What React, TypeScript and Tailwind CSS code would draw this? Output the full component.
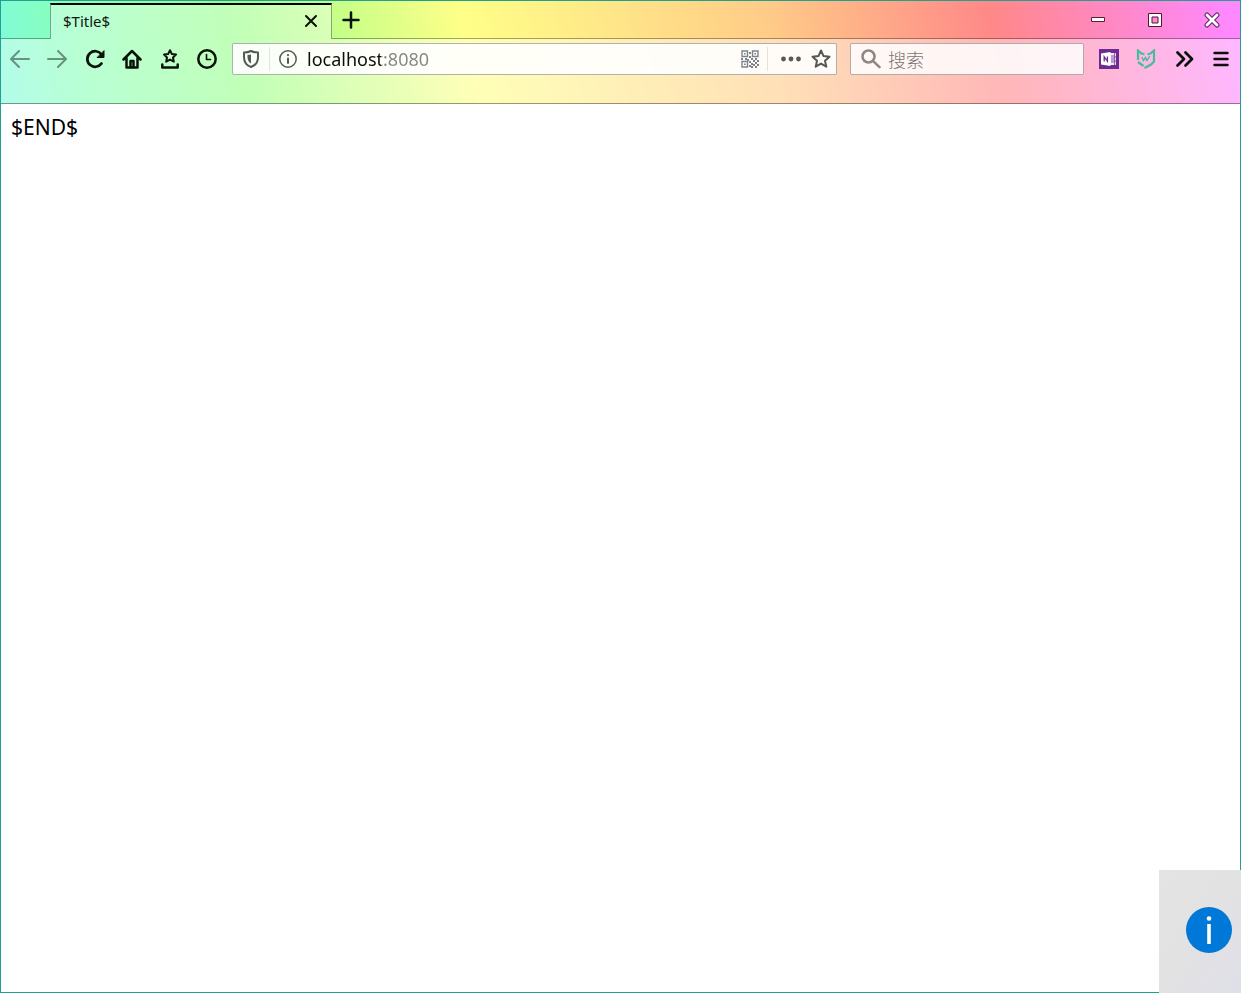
import type { ReactNode } from "react";

type IconButtonProps = {
  label: string;
  disabled?: boolean;
  children: ReactNode;
};

function IconButton({ label, disabled = false, children }: IconButtonProps) {
  return (
    <button
      type="button"
      aria-label={label}
      disabled={disabled}
      className="flex h-8 w-8 shrink-0 items-center justify-center text-[#0a120a] disabled:opacity-45"
    >
      {children}
    </button>
  );
}

function StrokeIcon({ width = 2, children }: { width?: number; children: ReactNode }) {
  return (
    <svg
      viewBox="0 0 20 20"
      className="h-5 w-5 shrink-0"
      fill="none"
      stroke="currentColor"
      strokeWidth={width}
      strokeLinecap="round"
      strokeLinejoin="round"
      aria-hidden="true"
    >
      {children}
    </svg>
  );
}

function QrIcon() {
  return (
    <svg
      viewBox="0 0 18 18"
      className="h-[18px] w-[18px]"
      fill="none"
      stroke="currentColor"
      strokeWidth="1.4"
      aria-hidden="true"
    >
      <path d="M1 1h5.500v5.500H1zM11.500 1H17v5.500h-5.500zM1 11.500h5.500V17H1z" />
      <path
        d="M3 3h1.600v1.600H3zM13.400 3H15v1.600h-1.600zM3 13.400h1.600V15H3zM8 2h2v2H8zM8 6h2v2H8zM0 8h2v2H0zM4 8h2v2H4zM6 9h2v2H6zM10 8h2v2h-2zM14 8h2v2h-2zM12 10h2v2h-2zM16 10h2v2h-2zM8 11h2v2H8zM10 13h2v2h-2zM14 12h2v2h-2zM12 14h2v2h-2zM16 14h2v2h-2zM8 15h2v2H8zM10 16h2v2h-2zM14 16h2v2h-2z"
        fill="currentColor"
        stroke="none"
      />
    </svg>
  );
}

function NotebookIcon() {
  return (
    <svg viewBox="0 0 20 20" className="h-5 w-5" aria-hidden="true">
      <path d="M0 0h20v20H0z" fill="#6a2c91" />
      <path d="M11 4h6v12h-6z" fill="#f3e6fa" />
      <path d="M12 6h3v8h-3z" fill="#b79ad0" />
      <path d="M15.600 4v12M15.600 8h2M15.600 12h2" stroke="#6a2c91" strokeWidth="0.8" />
      <path d="M2 4.500l9.500-1.500v14L2 15.500z" fill="#fff" />
      <path d="M5.200 12.500V7.700l3.200 4.600V7.500" fill="none" stroke="#6a2c91" strokeWidth="1.300" />
    </svg>
  );
}

function ShieldCatIcon() {
  return (
    <svg
      viewBox="0 0 20 20"
      className="h-5 w-5"
      fill="none"
      stroke="#45bd9c"
      strokeWidth="2.200"
      aria-hidden="true"
    >
      <path d="M8.500 5.200L5.500 4.500L2 1.500v9.500M2 13l5.500 4M11.500 5.200l3-.7L18 1.500V12.500l-3 3-6.500 3.500" />
      <path d="M5.800 8l1.700 3.500L9.500 8.500l1.500 3L13.800 7" strokeWidth="1.400" />
    </svg>
  );
}

function TitleBar() {
  return (
    <header className="flex h-[38px]">
      <div className="w-[49px] shrink-0 border-b border-black/35" />
      <div className="mt-0.5 flex w-[282px] shrink-0 items-start justify-between border-x border-t-2 border-x-black/35 border-t-black bg-white/40 pt-1.5 pr-2.5 pl-3">
        <span className="text-[15px] leading-5 text-[#101810]">$Title$</span>
        <button
          type="button"
          aria-label="Close tab"
          className="flex h-5 w-5 items-center justify-center text-[#0a120a]"
        >
          <StrokeIcon>
            <path d="M5 5l10 10M15 5L5 15" />
          </StrokeIcon>
        </button>
      </div>
      <div className="flex min-w-0 flex-1 items-center justify-between border-b border-black/35">
        <button
          type="button"
          aria-label="New tab"
          className="flex h-9 w-[38px] items-center justify-center text-[#0a120a]"
        >
          <StrokeIcon width={2.5}>
            <path d="M10 2.500v15M2.500 10h15" />
          </StrokeIcon>
        </button>
        <div className="flex">
          <button type="button" aria-label="Minimize" className="flex h-9 w-[57px] items-center justify-center">
            <svg viewBox="0 0 14 14" className="h-3.5 w-3.5" aria-hidden="true">
              <path d="M0.500 4.500h13v4h-13z" fill="#fff" stroke="#5a2038" />
            </svg>
          </button>
          <button type="button" aria-label="Maximize" className="flex h-9 w-[57px] items-center justify-center">
            <svg viewBox="0 0 14 14" className="h-3.5 w-3.5" aria-hidden="true">
              <path
                d="M0.500 0.500h13v13h-13zM4 4v6h6V4z"
                fill="#fff"
                fillRule="evenodd"
                stroke="#4a1836"
              />
            </svg>
          </button>
          <button type="button" aria-label="Close window" className="flex h-9 w-[57px] items-center justify-center">
            <svg viewBox="0 0 16 16" className="h-4 w-4" strokeLinecap="round" aria-hidden="true">
              <path d="M3 3l10 10M13 3L3 13" stroke="#6a2a70" strokeWidth="5" />
              <path d="M3 3l10 10M13 3L3 13" stroke="#fff" strokeWidth="2.800" />
            </svg>
          </button>
        </div>
      </div>
    </header>
  );
}

function AddressField() {
  return (
    <div className="flex h-8 min-w-0 flex-1 items-center rounded-xs border border-black/30 bg-white/90 text-[#555855]">
      <button type="button" aria-label="Tracking protection" className="flex h-8 w-9 items-center justify-center">
        <StrokeIcon>
          <path d="M10 2c-2 1-4.500 1.500-7 1.500V8c0 5 2.500 8.500 7 10 4.500-1.500 7-5 7-10V3.500C14.500 3.500 12 3 10 2z" />
          <path d="M10 5.500v9C7.500 13 6.500 11 6.500 8V6c1.500 0 2.500-.2 3.500-.5z" fill="currentColor" stroke="none" />
        </StrokeIcon>
      </button>
      <span className="h-6 w-px bg-black/10" />
      <button type="button" aria-label="Site information" className="flex h-8 w-[35px] items-center justify-center">
        <StrokeIcon width={1.5}>
          <circle cx="10" cy="10" r="8.200" />
          <path d="M10 9.500v4.500M10 6v.2" strokeWidth="2" />
        </StrokeIcon>
      </button>
      <input
        type="text"
        aria-label="Address"
        defaultValue="localhost:8080"
        className="h-7 min-w-0 flex-1 bg-[linear-gradient(to_right,#0c0c0c_76px,#858585_76px)] bg-clip-text px-0.5 text-lg text-transparent outline-none"
      />
      <button
        type="button"
        aria-label="Page QR code"
        className="flex h-8 w-[34px] items-center justify-center text-[#7c838e]"
      >
        <QrIcon />
      </button>
      <span className="h-6 w-px bg-black/10" />
      <button type="button" aria-label="Page actions" className="ml-2 flex h-8 w-[30px] items-center justify-center">
        <svg viewBox="0 0 20 20" className="h-5 w-5" fill="currentColor" aria-hidden="true">
          <circle cx="2.500" cy="10" r="2.400" />
          <circle cx="10" cy="10" r="2.400" />
          <circle cx="17.500" cy="10" r="2.400" />
        </svg>
      </button>
      <button type="button" aria-label="Bookmark this page" className="flex h-8 w-[30px] items-center justify-center">
        <StrokeIcon>
          <path d="M10 1.500l2.500 5.600 6 .6-4.500 4 1.300 6L10 14.600l-5.300 3.100 1.300-6-4.500-4 6-.6z" />
        </StrokeIcon>
      </button>
    </div>
  );
}

function SearchField() {
  return (
    <label className="flex h-8 w-[234px] shrink-0 items-center rounded-xs border border-black/30 bg-white/85 px-2.5 text-[#8f8585]">
      <StrokeIcon width={2.5}>
        <circle cx="7.500" cy="7.500" r="6" />
        <path d="M12.200 12.200l6.300 6" />
      </StrokeIcon>
      <input
        type="text"
        aria-label="Search"
        placeholder="搜索"
        className="ml-[7px] h-7 min-w-0 flex-1 bg-transparent font-['Noto_Sans_CJK_SC',sans-serif] text-lg font-light outline-none placeholder:text-[#7d7474]"
      />
    </label>
  );
}

function Toolbar() {
  return (
    <div className="flex h-[65px] items-start border-b border-black/40 bg-white/40 px-[3px] pt-1">
      <nav aria-label="Navigation" className="mr-[9px] flex w-[219px] shrink-0 justify-between">
        <IconButton label="Back" disabled>
          <StrokeIcon>
            <path d="M19 10H1.500M9 2L1 10l8 8" />
          </StrokeIcon>
        </IconButton>
        <IconButton label="Forward" disabled>
          <StrokeIcon>
            <path d="M1 10h17.500M11 2l8 8-8 8" />
          </StrokeIcon>
        </IconButton>
        <IconButton label="Reload">
          <StrokeIcon width={2.75}>
            <path d="M16.500 14.500A7.800 7.800 0 1 1 16.500 5.500" />
            <path d="M19 2v6.500h-6.500z" fill="currentColor" strokeWidth="1" />
          </StrokeIcon>
        </IconButton>
        <IconButton label="Home">
          <StrokeIcon width={2.5}>
            <path d="M1.500 10.500L10 2l8.500 8.500M4.500 9v9.500h11V9" />
            <path d="M8.500 18v-6h3v6" />
          </StrokeIcon>
        </IconButton>
        <IconButton label="Bookmarks">
          <StrokeIcon>
            <path d="M10 1.200l1.900 3.900 4.100.5-3 2.900.8 4.200-3.800-2.100-3.800 2.100.8-4.200-3-2.900 4.100-.5z" />
            <path d="M2.300 15.500v3h15.400v-3" strokeWidth="2.500" />
          </StrokeIcon>
        </IconButton>
        <IconButton label="History">
          <StrokeIcon>
            <circle cx="10" cy="10" r="8.700" strokeWidth="2.500" />
            <path d="M9.500 5.500V10.500h4" strokeWidth="1.600" />
          </StrokeIcon>
        </IconButton>
      </nav>
      <AddressField />
      <div className="ml-[13px] flex shrink-0">
        <SearchField />
      </div>
      <div className="ml-[9px] flex w-36 shrink-0 justify-between">
        <IconButton label="Notebook clipper">
          <NotebookIcon />
        </IconButton>
        <IconButton label="Web protection">
          <ShieldCatIcon />
        </IconButton>
        <IconButton label="More tools">
          <StrokeIcon width={2.75}>
            <path d="M3.500 3.500L10 10l-6.500 6.500M11.500 3.500L18 10l-6.500 6.500" />
          </StrokeIcon>
        </IconButton>
        <IconButton label="Open menu">
          <StrokeIcon width={2.5}>
            <path d="M3.500 4h13M3.500 10h13M3.500 16h13" />
          </StrokeIcon>
        </IconButton>
      </div>
    </div>
  );
}

function InfoCorner() {
  return (
    <aside className="absolute -right-px -bottom-px flex h-[123px] w-[82px] items-center justify-end bg-linear-to-br from-[#e4e4e4] via-[#e2e2e3] to-[#dfdfe9] pr-[9px] pb-1">
      <button
        type="button"
        aria-label="Information"
        className="flex h-[46px] w-[46px] items-center justify-center rounded-full bg-[#0078d7] text-white"
      >
        <svg viewBox="0 0 46 46" className="h-[46px] w-[46px]" fill="currentColor" aria-hidden="true">
          <circle cx="23" cy="11.500" r="2.300" />
          <path d="M21.200 17h3.600v20h-3.600z" />
        </svg>
      </button>
    </aside>
  );
}

export default function App() {
  return (
    <div className="relative flex min-h-screen flex-col border border-[#20a08e] bg-white font-['Noto_Sans','Noto_Sans_CJK_SC',sans-serif]">
      <div className="bg-[linear-gradient(80deg,#80fbdc_0%,#88ffbb_6%,#99ff88_20%,#ffff88_38%,#ffcc88_62%,#ff8888_80%,#ff88ff_99%)]">
        <TitleBar />
        <Toolbar />
      </div>
      <main className="flex-1 px-2.5 py-2">
        <p className="text-[21px] leading-[30px] text-black">$END$</p>
      </main>
      <InfoCorner />
    </div>
  );
}
